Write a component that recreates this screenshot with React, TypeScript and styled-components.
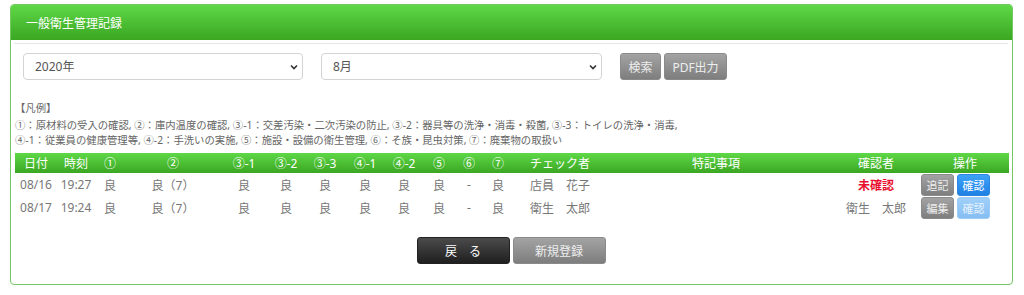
import React from "react";
import styled, { createGlobalStyle } from "styled-components";

const GlobalStyle = createGlobalStyle`
  html, body { margin: 0; padding: 0; background: #fff; }
  body { font-family: "Noto Sans", "Noto Sans CJK JP", sans-serif; color: #777; }
  * { box-sizing: border-box; }
`;

const COLS = "42px 38px 30px 96px 46px 38px 40px 40px 38px 32px 28px 30px 88px 230px 90px 88px";

const Panel = styled.section`
  margin: 4px 11px 0 10px;
  height: 281px;
  border: 1px solid #74c763;
  border-radius: 4px;
  overflow: hidden;
  display: flex;
  flex-direction: column;
`;

const PanelHeader = styled.header`
  height: 35px;
  flex: none;
  display: flex;
  align-items: center;
  padding-left: 15px;
  background: linear-gradient(#5ed847, #3ba622);
  color: #fff;
  font-size: 12px;
  font-family: "Noto Sans CJK JP", sans-serif;
`;

const PanelBody = styled.div`
  padding: 3px 4px 0 3px;
  display: flex;
  flex-direction: column;
`;

const Divider = styled.div`
  height: 1px;
  background: #e6e6e6;
`;

const FilterRow = styled.div`
  display: flex;
  align-items: center;
  margin-top: 9px;
  padding-left: 9px;
  gap: 18px;
`;

const SelectWrap = styled.div<{ $w: number }>`
  position: relative;
  width: ${(p) => p.$w}px;
  height: 27px;
`;

const Select = styled.select`
  appearance: none;
  -webkit-appearance: none;
  width: 100%;
  height: 100%;
  border: 1px solid #d3d3d3;
  border-radius: 4px;
  background: #fff;
  padding: 0 0 0 11px;
  font-family: "Noto Sans", "Noto Sans CJK JP", sans-serif;
  font-size: 12px;
  color: #555;
  outline: none;
`;

const Chevron = styled.svg`
  position: absolute;
  right: 5px;
  top: 11px;
  width: 8px;
  height: 6px;
  pointer-events: none;
`;

const BtnGroup = styled.div`
  display: flex;
  gap: 3px;
`;

const GrayButton = styled.button<{ $w: number; $h?: number; $fs?: number }>`
  width: ${(p) => p.$w}px;
  height: ${(p) => p.$h ?? 27}px;
  padding: 0;
  border: 1px solid #8a8a8a;
  border-radius: 3px;
  background: linear-gradient(#a3a3a3, #7e7e7e);
  color: #eee;
  font-family: "Noto Sans", "Noto Sans CJK JP", sans-serif;
  font-size: ${(p) => p.$fs ?? 12}px;
  cursor: pointer;
`;

const BlueButton = styled.button<{ $disabled?: boolean }>`
  width: 33px;
  height: 22px;
  padding: 0;
  border: 1px solid ${(p) => (p.$disabled ? "#9ccbf5" : "#2a86e0")};
  border-radius: 3px;
  background: ${(p) =>
    p.$disabled ? "linear-gradient(#9fd0fa, #86bef2)" : "linear-gradient(#3ea2f7, #1f80e3)"};
  color: ${(p) => (p.$disabled ? "#e6f2fd" : "#fff")};
  font-family: "Noto Sans CJK JP", sans-serif;
  font-size: 11px;
`;

const Legend = styled.div`
  margin-top: 20px;
  padding-left: 1px;
  font-size: 10.35px;
  line-height: 15px;
  color: #666;
  font-family: "Noto Sans", "Noto Sans CJK JP", sans-serif;
  p { margin: 0; }
`;

const LegendTitle = styled.p`
  line-height: 16px;
  margin-bottom: 2px !important;
`;

const Table = styled.div`
  margin-top: 5px;
  margin-left: 1px;
  width: 994px;
`;

const HeadRow = styled.div`
  display: grid;
  grid-template-columns: ${COLS};
  height: 20px;
  align-items: center;
  background: linear-gradient(#5ed847, #3ba622);
  color: #fff;
  font-size: 12px;
  font-family: "Noto Sans", "Noto Sans CJK JP", sans-serif;
`;

const Row = styled.div`
  display: grid;
  grid-template-columns: ${COLS};
  height: 23px;
  align-items: center;
  color: #777;
  font-size: 12px;
  font-family: "Noto Sans", "Noto Sans CJK JP", sans-serif;
`;

const Cell = styled.div<{ $align?: "left" | "center"; $pl?: number }>`
  text-align: ${(p) => p.$align ?? "center"};
  padding-left: ${(p) => p.$pl ?? 0}px;
  white-space: nowrap;
`;

const Unconfirmed = styled.span`
  color: #e8102e;
  font-weight: bold;
`;

const ActionCell = styled.div`
  display: flex;
  gap: 3px;
`;

const Footer = styled.div`
  margin-top: 18px;
  display: flex;
  justify-content: center;
  gap: 3px;
`;

const DarkButton = styled.button`
  width: 93px;
  height: 27px;
  padding: 0;
  border: 1px solid #222;
  border-radius: 3px;
  background: linear-gradient(#4b4b4b, #1f1f1f);
  color: #fff;
  font-family: "Noto Sans CJK JP", sans-serif;
  font-size: 12px;
`;

type RowData = {
  date: string;
  time: string;
  vals: string[];
  checker: string;
  note: string;
  confirmer: string | null;
  editLabel: string;
  confirmDisabled: boolean;
};

const rows: RowData[] = [
  {
    date: "08/16",
    time: "19:27",
    vals: ["良", "良（7）", "良", "良", "良", "良", "良", "良", "-", "良"],
    checker: "店員　花子",
    note: "",
    confirmer: null,
    editLabel: "追記",
    confirmDisabled: false,
  },
  {
    date: "08/17",
    time: "19:24",
    vals: ["良", "良（7）", "良", "良", "良", "良", "良", "良", "-", "良"],
    checker: "衛生　太郎",
    note: "",
    confirmer: "衛生　太郎",
    editLabel: "編集",
    confirmDisabled: true,
  },
];

const heads = ["①", "②", "③-1", "③-2", "③-3", "④-1", "④-2", "⑤", "⑥", "⑦"];

export default function App() {
  return (
    <>
      <GlobalStyle />
      <Panel>
        <PanelHeader>一般衛生管理記録</PanelHeader>
        <PanelBody>
          <Divider />
          <FilterRow>
            <SelectWrap $w={280}>
              <Select defaultValue="2020">
                <option value="2020">2020年</option>
              </Select>
              <Chevron viewBox="0 0 8 6">
                <path d="M1 1.5 L4 4.5 L7 1.5" fill="none" stroke="#333" strokeWidth="1.6" />
              </Chevron>
            </SelectWrap>
            <SelectWrap $w={281}>
              <Select defaultValue="8">
                <option value="8">8月</option>
              </Select>
              <Chevron viewBox="0 0 8 6">
                <path d="M1 1.5 L4 4.5 L7 1.5" fill="none" stroke="#333" strokeWidth="1.6" />
              </Chevron>
            </SelectWrap>
            <BtnGroup>
              <GrayButton $w={41}>検索</GrayButton>
              <GrayButton $w={63}>PDF出力</GrayButton>
            </BtnGroup>
          </FilterRow>
          <Legend>
            <LegendTitle>【凡例】</LegendTitle>
            <p>
              ①：原材料の受入の確認, ②：庫内温度の確認, ③-1：交差汚染・二次汚染の防止, ③-2：器具等の洗浄・消毒・殺菌, ③-3：トイレの洗浄・消毒,
            </p>
            <p>
              ④-1：従業員の健康管理等, ④-2：手洗いの実施, ⑤：施設・設備の衛生管理, ⑥：そ族・昆虫対策, ⑦：廃棄物の取扱い
            </p>
          </Legend>
          <Table>
            <HeadRow>
              <Cell>日付</Cell>
              <Cell>時刻</Cell>
              {heads.map((h) => (
                <Cell key={h}>{h}</Cell>
              ))}
              <Cell $align="left" $pl={17}>チェック者</Cell>
              <Cell>特記事項</Cell>
              <Cell>確認者</Cell>
              <Cell>操作</Cell>
            </HeadRow>
            {rows.map((r) => (
              <Row key={r.date}>
                <Cell>{r.date}</Cell>
                <Cell>{r.time}</Cell>
                {r.vals.map((v, i) => (
                  <Cell key={i}>{v}</Cell>
                ))}
                <Cell $align="left" $pl={17}>{r.checker}</Cell>
                <Cell>{r.note}</Cell>
                <Cell>{r.confirmer ?? <Unconfirmed>未確認</Unconfirmed>}</Cell>
                <ActionCell>
                  <GrayButton $w={33} $h={22} $fs={11}>{r.editLabel}</GrayButton>
                  <BlueButton $disabled={r.confirmDisabled}>確認</BlueButton>
                </ActionCell>
              </Row>
            ))}
          </Table>
          <Footer>
            <DarkButton>戻　る</DarkButton>
            <GrayButton $w={93}>新規登録</GrayButton>
          </Footer>
        </PanelBody>
      </Panel>
    </>
  );
}
